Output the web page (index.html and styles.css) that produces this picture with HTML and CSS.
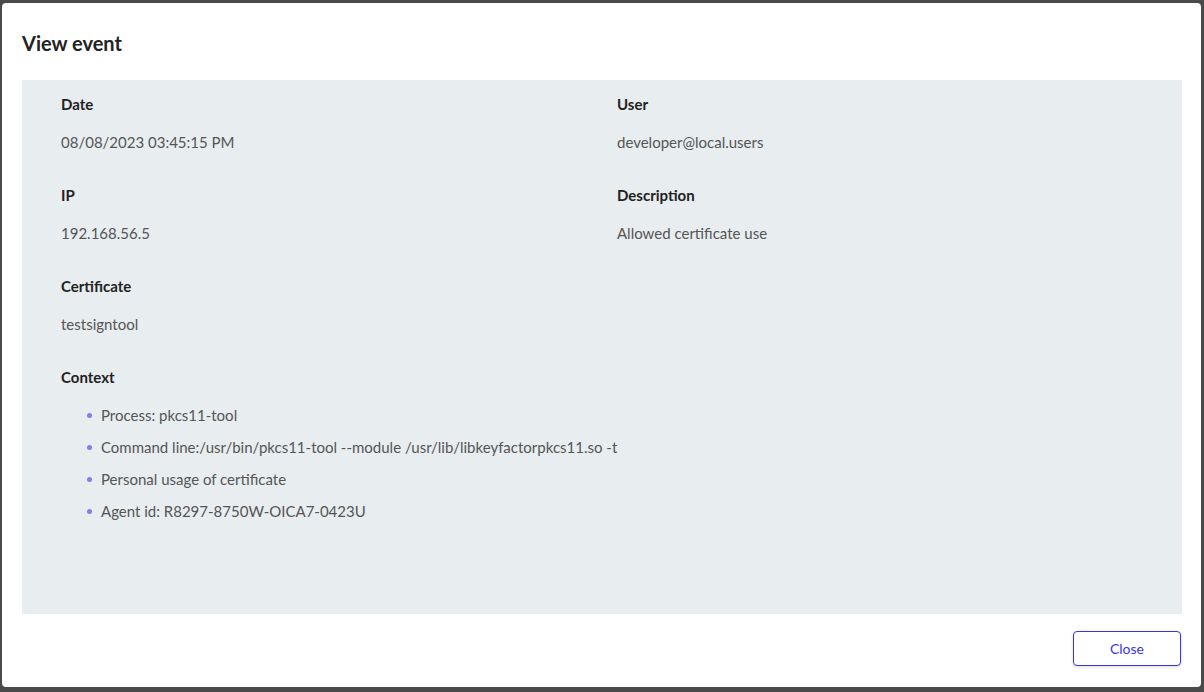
FILE: index.html
```html
<!DOCTYPE html>
<html lang="en">
<head>
  <meta charset="UTF-8">
  <meta name="viewport" content="width=device-width, initial-scale=1.0">
  <title>View event</title>
  <link rel="stylesheet" href="styles.css">
</head>
<body>

<div class="modal">
  <div class="modal-header">
    <h2>View event</h2>
  </div>

  <!-- Event details -->
  <div class="modal-body">
    <div class="fields">
      <div class="field">
        <div class="label">Date</div>
        <div class="value">08/08/2023 03:45:15 PM</div>
      </div>
      <div class="field">
        <div class="label">User</div>
        <div class="value">developer@local.users</div>
      </div>
      <div class="field">
        <div class="label">IP</div>
        <div class="value">192.168.56.5</div>
      </div>
      <div class="field">
        <div class="label">Description</div>
        <div class="value">Allowed certificate use</div>
      </div>
      <div class="field">
        <div class="label">Certificate</div>
        <div class="value">testsigntool</div>
      </div>
      <div class="field"></div>
      <div class="field wide">
        <div class="label">Context</div>
        <ul class="context">
          <li>Process: pkcs11-tool</li>
          <li>Command line:/usr/bin/pkcs11-tool --module /usr/lib/libkeyfactorpkcs11.so -t</li>
          <li>Personal usage of certificate</li>
          <li>Agent id: R8297-8750W-OICA7-0423U</li>
        </ul>
      </div>
    </div>
  </div>

  <div class="modal-footer">
    <button class="btn-close">Close</button>
  </div>
</div>

</body>
</html>
```

FILE: styles.css
```css
html, body {
  height: 100%;
}
body {
  margin: 0;
  padding: 3px 3px 5px 2px;
  box-sizing: border-box;
  background-color: #4a4a4a;
  font-family: Lato, "Open Sans", sans-serif;
  display: flex;
}
.modal {
  flex: 1;
  display: flex;
  flex-direction: column;
  background-color: #fff;
  border-radius: 4px;
}
.modal-header {
  height: 77px;
  padding: 0 20px;
  display: flex;
  align-items: center;
}
.modal-header h2 {
  margin: 2px 0 0;
  font-size: 20px;
  font-weight: 700;
  color: #222;
}
.modal-body {
  flex: 1;
  margin: 0 19px 0 20px;
  padding: 14px 39px;
  background-color: #e8edf0;
}
.fields {
  display: grid;
  grid-template-columns: 1fr 1fr;
  column-gap: 30px;
}
.field {
  margin-bottom: 33px;
}
.field.wide {
  grid-column: 1 / 3;
}
.label {
  font-size: 15px;
  line-height: 20px;
  font-weight: 700;
  color: #222;
  margin-bottom: 18px;
}
.value {
  font-size: 15px;
  line-height: 20px;
  color: #555;
}
.context {
  margin: 0;
  padding-left: 40px;
  list-style: none;
}
.context li {
  position: relative;
  font-size: 15px;
  line-height: 20px;
  color: #555;
  margin-bottom: 12px;
}
.context li::before {
  content: "";
  position: absolute;
  left: -14px;
  top: 8px;
  width: 5px;
  height: 5px;
  border-radius: 50%;
  background-color: #7f7ff5;
}
.modal-footer {
  height: 73px;
  padding: 17px 20px 0;
  box-sizing: border-box;
  display: flex;
  justify-content: flex-end;
  align-items: flex-start;
}
.btn-close {
  width: 108px;
  height: 35px;
  background-color: #fff;
  border: 1px solid #3535e6;
  border-radius: 4px;
  color: #3535e6;
  font-family: inherit;
  font-size: 14px;
  box-shadow: 0 1px 3px rgba(0, 0, 0, 0.15);
  cursor: pointer;
}
```
